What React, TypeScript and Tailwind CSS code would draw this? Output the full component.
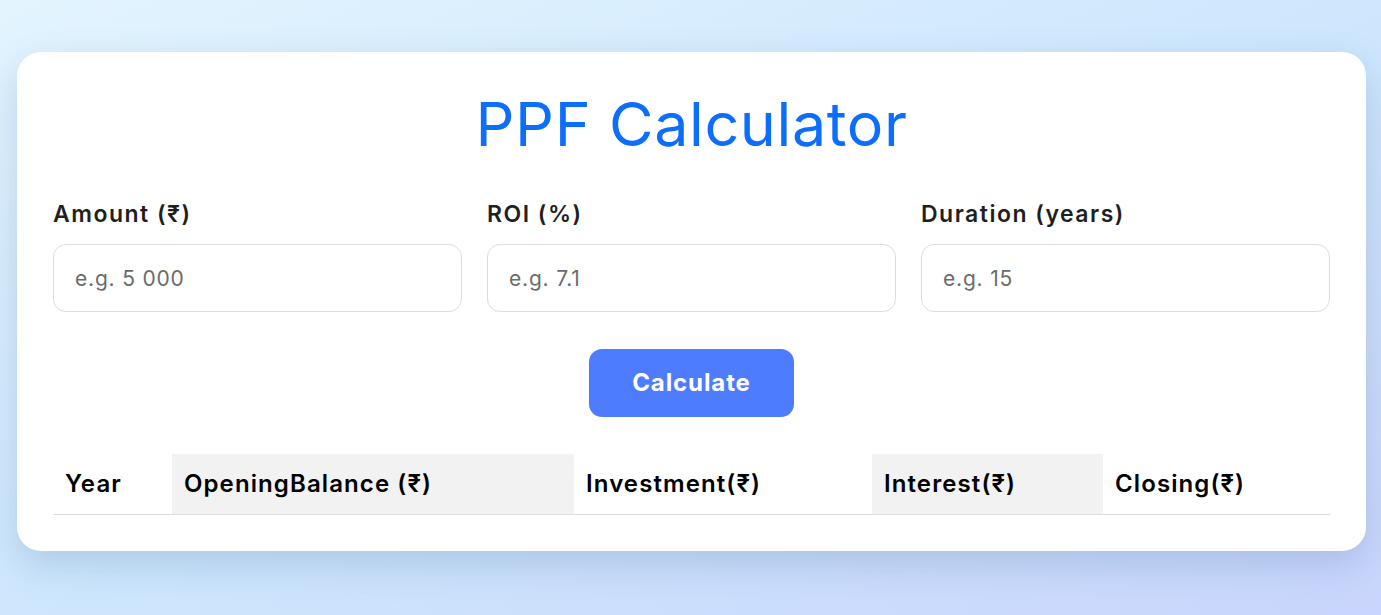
import React from "react";

export default function App() {
  const font = { fontFamily: "Inter, 'Noto Sans', sans-serif" };
  return (
    <div
      className="min-h-[615px] w-full bg-gradient-to-br from-[#e3f4fe] via-[#cee7fd] to-[#c9d5fc] pt-[52px] pl-[17px] pr-[15px] pb-[65px]"
      style={font}
    >
      <div className="rounded-[24px] bg-white px-[36px] pt-[30px] pb-[36px] shadow-[0_14px_36px_rgba(60,100,150,0.22)]">
        <h1 className="text-center text-[61px] font-normal leading-[84px] text-[#0d6efd] tracking-[0.6px]">
          PPF Calculator
        </h1>
        <div className="mt-[33px] grid grid-cols-3 gap-[25px]">
          {[
            ["Amount (₹)", "e.g. 5 000"],
            ["ROI (%)", "e.g. 7.1"],
            ["Duration (years)", "e.g. 15"],
          ].map(([label, ph]) => (
            <div key={label} className="flex flex-col">
              <label className="text-[23px] font-semibold leading-[30px] tracking-[1.5px] text-[#1f1f1f]">
                {label}
              </label>
              <input
                placeholder={ph}
                className="mt-[15px] h-[68px] w-full rounded-[13px] border border-[#dcdde3] px-[21px] text-[21px] tracking-[0.8px] text-[#333] outline-none placeholder:text-[#6b6b6b]"
                style={font}
              />
            </div>
          ))}
        </div>
        <div className="mt-[37px] flex justify-center">
          <button
            className="h-[68px] w-[205px] rounded-[13px] bg-[#4e7cff] text-[24px] font-bold tracking-[0.9px] text-white"
            style={font}
          >
            Calculate
          </button>
        </div>
        <table className="mt-[37px] w-full border-collapse table-fixed">
          <colgroup>
            <col className="w-[119px]" />
            <col className="w-[402px]" />
            <col className="w-[298px]" />
            <col className="w-[231px]" />
            <col className="w-[227px]" />
          </colgroup>
          <thead>
            <tr className="h-[60px] border-b border-[#dedede] text-left text-[24px] font-semibold tracking-[1.1px] text-black">
              <th className="px-[12px] font-semibold">Year</th>
              <th className="bg-[#f2f2f2] px-[12px] font-semibold">OpeningBalance (₹)</th>
              <th className="px-[12px] font-semibold">Investment(₹)</th>
              <th className="bg-[#f2f2f2] px-[12px] font-semibold">Interest(₹)</th>
              <th className="px-[12px] font-semibold">Closing(₹)</th>
            </tr>
          </thead>
          <tbody></tbody>
        </table>
      </div>
    </div>
  );
}
